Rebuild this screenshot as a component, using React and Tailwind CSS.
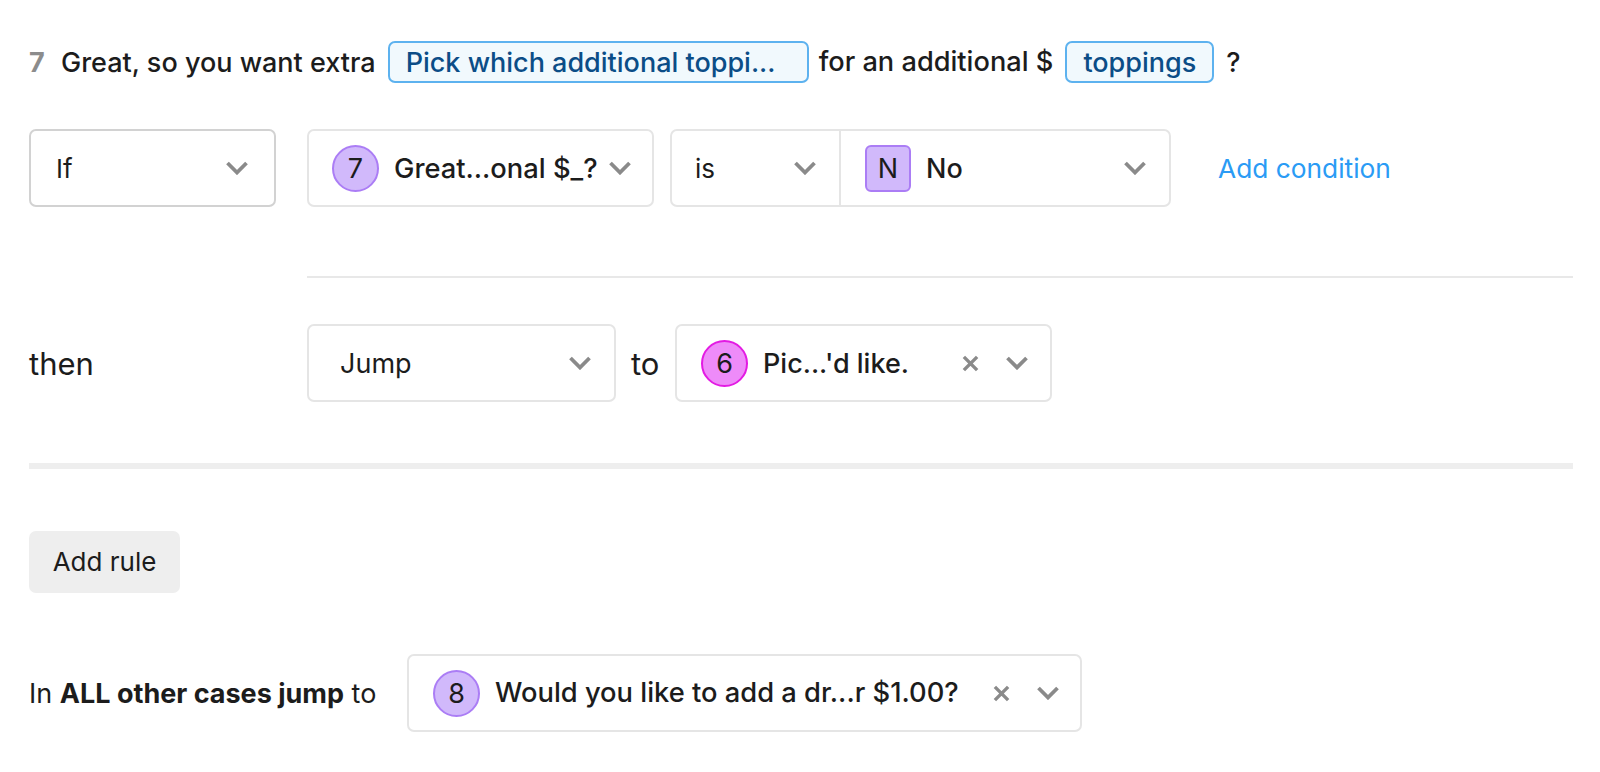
const Chevron = ({ className = "" }) => (
  <svg viewBox="0 0 24 14" className={`w-[24px] h-[14px] shrink-0 ${className}`} fill="none" stroke="#8a8a8a" strokeWidth="3.8">
    <path d="M2.5 2 L12 11.5 L21.5 2" />
  </svg>
);
const Cross = () => (
  <svg viewBox="0 0 18 18" className="w-[17px] h-[17px] shrink-0" fill="none" stroke="#8a8a8a" strokeWidth="3.6">
    <path d="M2 2 L16 16 M16 2 L2 16" />
  </svg>
);
const Badge = ({ children, pink }) => (
  <span className={`w-[47px] h-[47px] rounded-full border-2 flex items-center justify-center shrink-0 font-normal text-[27px] text-[#1c1c1c] ${pink ? "bg-[#ee8bf9] border-[#e31be3]" : "bg-[#d1b9fb] border-[#ab7df5]"}`}>{children}</span>
);
const Pill = ({ className, children }) => (
  <span className={`h-[42px] rounded-[7px] border-2 border-[#5db2ef] bg-[#f1f9fd] text-[#0b4d87] flex items-center shrink-0 whitespace-nowrap ${className}`}>{children}</span>
);
const Box = ({ className = "", children, border = "border-[#e5e5e5]" }) => (
  <div className={`h-[78px] rounded-[7px] border-2 ${border} bg-white flex items-center shrink-0 ${className}`}>{children}</div>
);

export default function App() {
  return (
    <div className="w-[1600px] h-[772px] overflow-hidden bg-white pl-[29px] pr-[27px] pt-[41px] text-[26px] leading-none text-[#1c1c1c] font-['Inter','Liberation_Sans',sans-serif]">
      <div className="flex items-center h-[42px] font-medium text-[27px]">
        <span className="w-[32px] text-[#8c8c8c] font-bold">7</span>
        <span className="whitespace-nowrap">Great, so you want extra</span>
        <Pill className="ml-[12px] w-[421px] pl-[16px]">Pick which additional toppi...</Pill>
        <span className="ml-[10px] whitespace-nowrap text-[27.2px]">for an additional $</span>
        <Pill className="ml-[12px] w-[149px] justify-center">toppings</Pill>
        <span className="ml-[12px]">?</span>
      </div>

      <div className="flex items-center mt-[46px]">
        <Box border="border-[#d2d2d2]" className="w-[247px] pl-[25px] pr-[25px] justify-between">
          <span className="pt-[2px]">If</span><Chevron />
        </Box>
        <Box className="ml-[31px] w-[347px] pl-[23px] pr-[20px]">
          <Badge>7</Badge>
          <span className="ml-[15px] pt-[2px] font-medium whitespace-nowrap text-[27.3px]">Great...onal $_?</span>
          <Chevron className="ml-auto" />
        </Box>
        <Box className="ml-[16px] w-[501px]">
          <div className="w-[169px] h-full border-r-2 border-[#e5e5e5] pl-[23px] pr-[22px] flex items-center justify-between">
            <span className="pt-[2px]">is</span><Chevron />
          </div>
          <div className="flex-1 flex items-center pl-[24px] pr-[22px]">
            <span className="w-[46px] h-[47px] rounded-[6px] border-2 border-[#ab7df5] bg-[#d1b9fb] flex items-center justify-center text-[27px]">N</span>
            <span className="ml-[15px] pt-[1px] font-medium text-[27px]">No</span>
            <Chevron className="ml-auto" />
          </div>
        </Box>
        <span className="ml-[47px] pt-[2px] text-[#2a9bf5] whitespace-nowrap text-[26.3px]">Add condition</span>
      </div>

      <div className="ml-[278px] mt-[69px] h-[2px] bg-[#e8e8e8]" />

      <div className="flex items-center mt-[46px]">
        <span className="w-[278px] text-[31px]">then</span>
        <Box className="w-[309px] pl-[31px] pr-[22px] justify-between">
          <span className="text-[27px]">Jump</span><Chevron />
        </Box>
        <span className="ml-[15px] w-[44px] text-[31px]">to</span>
        <Box className="w-[377px] pl-[24px] pr-[21px]">
          <Badge pink>6</Badge>
          <span className="ml-[15px] font-medium whitespace-nowrap text-[27px]">Pic...'d like.</span>
          <span className="ml-auto mr-[26px]"><Cross /></span>
          <Chevron />
        </Box>
      </div>

      <div className="mt-[61px] h-[6px] bg-[#eeeeee]" />

      <button className="block mt-[62px] w-[151px] h-[62px] rounded-[7px] bg-[#eeeeee] text-[26px] text-[#1c1c1c]">Add rule</button>

      <div className="flex items-center mt-[61px]">
        <span className="w-[378px] whitespace-nowrap text-[27px]">In <b className="font-bold">ALL other cases jump</b> to</span>
        <Box className="w-[675px] pl-[24px] pr-[20px]">
          <Badge>8</Badge>
          <span className="ml-[15px] font-medium whitespace-nowrap text-[27.3px]">Would you like to add a dr...r $1.00?</span>
          <span className="ml-auto mr-[26px]"><Cross /></span>
          <Chevron />
        </Box>
      </div>
    </div>
  );
}
